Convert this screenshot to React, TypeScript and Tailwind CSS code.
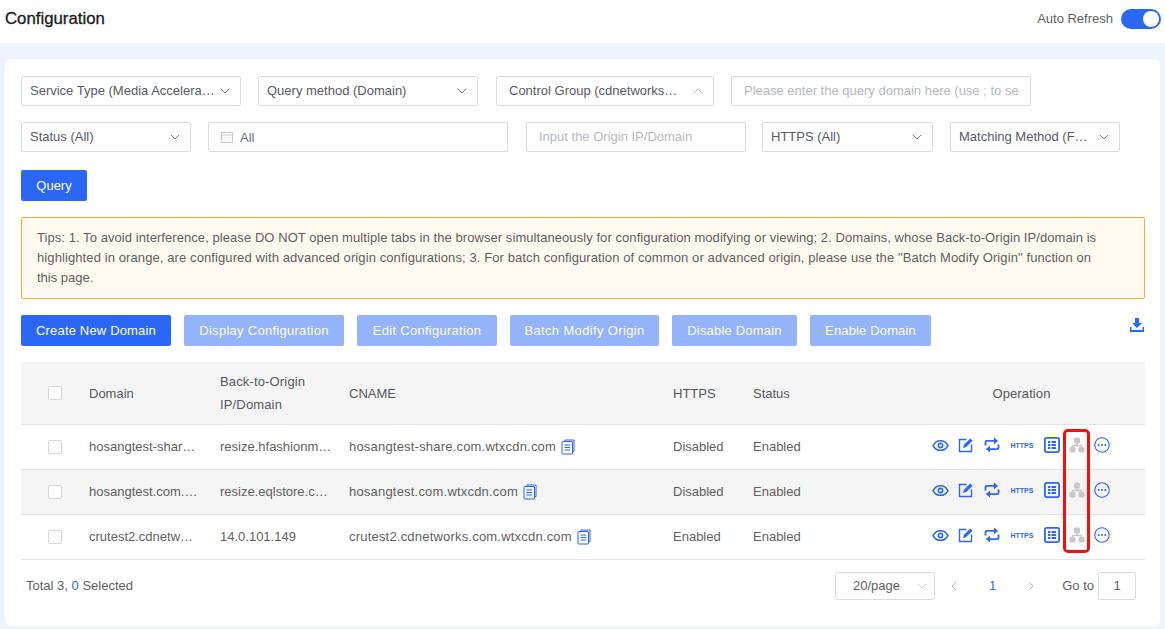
import React from "react";

const Chevron = ({ className = "text-[#7a7f8a]" }: { className?: string }) => (
  <svg width="12" height="12" viewBox="0 0 12 12" fill="none" className={className}>
    <path d="M2 4l4 4 4-4" stroke="currentColor" strokeWidth="1" strokeLinecap="round" strokeLinejoin="round" />
  </svg>
);

const Select = ({ label, w, up }: { label: string; w: string; up?: boolean }) => (
  <div className={`${w} h-[30px] shrink-0 border border-[#d9dbdf] rounded-[2px] flex items-center ${up ? "pl-3" : "pl-2"} pr-[9px] justify-between text-[#565a66]`}>
    <span className="truncate">{label}</span>
    <span className={up ? "rotate-180 shrink-0 ml-1" : "shrink-0 ml-1"}>
      <Chevron className={up ? "text-[#b9bcc2]" : "text-[#7a7f8a]"} />
    </span>
  </div>
);

const Eye = () => (
  <svg width="17" height="17" viewBox="0 0 16 16" fill="none">
    <path d="M1 8c1.600-3 4-4.500 7-4.500S13.400 5 15 8c-1.600 3-4 4.500-7 4.500S2.600 11 1 8z" stroke="#2b67f6" strokeWidth="1.500" />
    <circle cx="8" cy="8" r="2" stroke="#2b67f6" strokeWidth="1.500" />
  </svg>
);
const Edit = () => (
  <svg width="16" height="16" viewBox="0 0 16 16" fill="none">
    <path d="M8.500 2.500H1.500v12h12V7.500" stroke="#2b67f6" strokeWidth="1.400" />
    <path d="M5 11l.9-3.200 6.400-6.400 2.300 2.300-6.400 6.400z" fill="#2b67f6" />
  </svg>
);
const Retweet = () => (
  <svg width="16" height="16" viewBox="0 0 16 16" fill="none">
    <path d="M1.500 8.500V5.200c0-.8.500-1.300 1.300-1.300H12" stroke="#2b67f6" strokeWidth="1.900" />
    <path d="M10 0.500l4.200 3.400L10 7.300z" fill="#2b67f6" />
    <path d="M14.500 7.500v3.300c0 .8-.5 1.300-1.300 1.300H4" stroke="#2b67f6" strokeWidth="1.900" />
    <path d="M6 8.700L1.800 12.100 6 15.500z" fill="#2b67f6" />
  </svg>
);
const TableIcon = () => (
  <svg width="16" height="16" viewBox="0 0 16 16" fill="none">
    <rect x="0.900" y="0.900" width="14.200" height="14.200" rx="1.500" stroke="#2b67f6" strokeWidth="1.800" />
    <rect x="4" y="4" width="2.400" height="2" fill="#2b67f6" />
    <rect x="7.500" y="4" width="4.500" height="2" fill="#2b67f6" />
    <rect x="4" y="7" width="2.400" height="2" fill="#2b67f6" />
    <rect x="7.500" y="7" width="4.500" height="2" fill="#2b67f6" />
    <rect x="4" y="10" width="2.400" height="2" fill="#2b67f6" />
    <rect x="7.500" y="10" width="4.500" height="2" fill="#2b67f6" />
  </svg>
);
const Org = () => (
  <svg width="16" height="16" viewBox="0 0 16 16" fill="none">
    <rect x="5" y="0.500" width="6" height="6" rx="1.500" fill="#c8c8c8" />
    <path d="M8 6v3M3.500 11V8.500h9V11" stroke="#c8c8c8" strokeWidth="1.600" />
    <rect x="0.500" y="10" width="6" height="5.500" rx="1.500" fill="#c8c8c8" />
    <rect x="9.500" y="10" width="6" height="5.500" rx="1.500" fill="#c8c8c8" />
  </svg>
);
const More = () => (
  <svg width="16" height="16" viewBox="0 0 16 16" fill="none">
    <circle cx="8" cy="8" r="7.200" stroke="#2b67f6" strokeWidth="1.100" />
    <circle cx="4.700" cy="8" r="1" fill="#2b67f6" />
    <circle cx="8" cy="8" r="1" fill="#2b67f6" />
    <circle cx="11.300" cy="8" r="1" fill="#2b67f6" />
  </svg>
);
const Copy = () => (
  <svg width="14" height="16" viewBox="0 0 14 16" fill="none" className="shrink-0 ml-[5px]">
    <path d="M4 2.500V1h9v11.500h-1.500" stroke="#2b67f6" strokeWidth="1" />
    <rect x="1" y="2.500" width="10.500" height="12.500" rx="0.500" stroke="#2b67f6" strokeWidth="1" />
    <path d="M3.500 6h5.500M3.500 8.500h5.500M3.500 11h5.500" stroke="#2b67f6" strokeWidth="1" />
  </svg>
);

const Check = () => <div className="w-[14px] h-[14px] border border-[#d5d7db] rounded-[2px] bg-white" />;

const rows = [
  { d: "hosangtest-shar…", o: "resize.hfashionm…", c: "hosangtest-share.com.wtxcdn.com", h: "Disabled", bg: "bg-white" },
  { d: "hosangtest.com.…", o: "resize.eqlstore.c…", c: "hosangtest.com.wtxcdn.com", h: "Disabled", bg: "bg-[#f5f5f5]" },
  { d: "crutest2.cdnetw…", o: "14.0.101.149", c: "crutest2.cdnetworks.com.wtxcdn.com", h: "Enabled", bg: "bg-white" },
];

export default function App() {
  return (
    <div className="relative w-[1165px] h-[629px] overflow-hidden bg-[#edf4fb] text-[13px] leading-[20px] text-[#5f5f5f] font-['Liberation_Sans',Arial,sans-serif]">
      <header className="h-[43px] bg-white flex items-center justify-between pl-[5px] pr-1 pb-[5px]">
        <h1 className="text-[16.800px] font-medium text-[#1a1a1a] [-webkit-text-stroke:0.3px_#1a1a1a]">Configuration</h1>
        <div className="flex items-center gap-2">
          <span className="text-[#5f5f5f]">Auto Refresh</span>
          <div className="w-10 h-5 rounded-full bg-[#2b67f6] flex items-center justify-end pr-[2px]">
            <div className="w-4 h-4 rounded-full bg-white" />
          </div>
        </div>
      </header>

      <main className="mt-4 mx-[5px] h-[567px] bg-white rounded-[6px] pt-[17px] pl-4 pr-[15px]">
        <div className="flex gap-[17px]">
          <Select label="Service Type (Media Accelera…" w="w-[220px]" />
          <Select label="Query method (Domain)" w="w-[220px]" />
          <div className="ml-px"><Select label="Control Group (cdnetworks…" w="w-[218px]" up /></div>
          <div className="w-[300px] h-[30px] border border-[#d9dbdf] rounded-[2px] flex items-center pl-3 text-[#b5b8be] whitespace-nowrap overflow-hidden">
            Please enter the query domain here (use ; to se
          </div>
        </div>
        <div className="flex gap-[17px] mt-4">
          <Select label="Status (All)" w="w-[170px]" />
          <div className="w-[300px] h-[30px] border border-[#d9dbdf] rounded-[2px] flex items-center pl-3 gap-[7px] text-[#6d717b]">
            <svg width="12" height="12" viewBox="0 0 12 12" fill="none">
              <rect x="0.500" y="1.500" width="11" height="10" stroke="#c5c7cc" />
              <path d="M0.500 4h11M3 0.500v2M9 0.500v2" stroke="#c5c7cc" />
              <path d="M3 6.500h1M5.500 6.500h1M8 6.500h1M3 9h1M5.500 9h1M8 9h1" stroke="#d5d7da" />
            </svg>
            <span className="pt-px">All</span>
          </div>
          <div className="ml-px w-[220px] h-[30px] border border-[#d9dbdf] rounded-[2px] flex items-center pl-3 text-[#b5b8be]">
            Input the Origin IP/Domain
          </div>
          <Select label="HTTPS (All)" w="w-[171px] -ml-px" />
          <Select label="Matching Method (F…" w="w-[170px]" />
        </div>
        <button className="block mt-[18px] w-[66px] h-[31px] bg-[#2b67f6] rounded-[2px] text-white">Query</button>

        <div className="mt-4 h-[82px] border border-[#f5a83e] rounded-[2px] bg-[#fffaf0] pl-[15px] pt-[10px] text-[#5f5f5f] leading-[20px] whitespace-nowrap">
          <div className="tracking-[0.065px]">Tips: 1. To avoid interference, please DO NOT open multiple tabs in the browser simultaneously for configuration modifying or viewing; 2. Domains, whose Back-to-Origin IP/domain is</div>
          <div className="tracking-[0.1px]">highlighted in orange, are configured with advanced origin configurations; 3. For batch configuration of common or advanced origin, please use the "Batch Modify Origin" function on</div>
          <div>this page.</div>
        </div>

        <div className="mt-4 h-[31px] flex items-center gap-[13px] text-white">
          <button className="h-[31px] w-[150px] bg-[#2b67f6] rounded-[2px] tracking-[0.17px]">Create New Domain</button>
          <button className="h-[31px] w-[160px] bg-[#94b3fb] rounded-[2px] tracking-[0.28px]">Display Configuration</button>
          <button className="h-[31px] w-[140px] bg-[#94b3fb] rounded-[2px] tracking-[0.28px]">Edit Configuration</button>
          <button className="h-[31px] w-[149px] bg-[#94b3fb] rounded-[2px] tracking-[0.35px]">Batch Modify Origin</button>
          <button className="h-[31px] w-[125px] bg-[#94b3fb] rounded-[2px] tracking-[0.2px]">Disable Domain</button>
          <button className="h-[31px] w-[121px] bg-[#94b3fb] rounded-[2px] tracking-[0.15px]">Enable Domain</button>
          <svg width="16" height="16" viewBox="0 0 16 16" className="ml-auto mb-[11px] shrink-0" fill="#2b67f6">
            <path d="M6 1h4v5h3l-5 5-5-5h3z" />
            <path d="M1 10h1.500v3h11v-3H15v5H1z" />
          </svg>
        </div>

        <div className="mt-4">
          <div className="h-[63px] bg-[#f5f5f5] border-b border-[#e3e3e3] flex items-center text-[#55585f]">
            <div className="w-[68px] pl-[27px]"><Check /></div>
            <div className="w-[131px] pt-px">Domain</div>
            <div className="w-[129px] leading-[23px] tracking-[0.15px]">Back-to-Origin<br />IP/Domain</div>
            <div className="w-[324px] pt-px">CNAME</div>
            <div className="w-[80px] pt-px">HTTPS</div>
            <div className="w-[154px] pt-px">Status</div>
            <div className="w-[229px] pt-px text-center tracking-[0.1px]">Operation</div>
          </div>
          {rows.map((r) => (
            <div key={r.c} className={`h-[45px] ${r.bg} border-b border-[#e3e3e3] flex items-center`}>
              <div className="w-[68px] pl-[27px]"><Check /></div>
              <div className="w-[131px] whitespace-nowrap">{r.d}</div>
              <div className="w-[129px] whitespace-nowrap">{r.o}</div>
              <div className="w-[324px] flex items-center whitespace-nowrap"><span className="tracking-[0.2px]">{r.c}</span><Copy /></div>
              <div className="w-[80px]">{r.h}</div>
              <div className="w-[174px]">Enabled</div>
              <div className="flex items-center h-full -mt-[4px]">
                <div className="w-[26px] flex justify-center"><Eye /></div>
                <div className="w-[26px] flex justify-center"><Edit /></div>
                <div className="w-[26px] flex justify-center"><Retweet /></div>
                <div className="w-[34px] flex justify-center text-[7px] font-bold text-[#2b67f6] leading-none">HTTPS</div>
                <div className="w-[26px] flex justify-center"><TableIcon /></div>
                <div className="w-[24px] flex justify-center"><Org /></div>
                <div className="w-[25px] flex justify-center"><More /></div>
              </div>
            </div>
          ))}
        </div>

        <div className="flex items-center mt-[12px] h-[28px] pl-[5px] text-[#5f5f5f]">
          <span>Total 3, <span className="text-[#2b67f6]">0</span> Selected</span>
          <div className="ml-auto flex items-center pr-[9px]">
            <div className="w-[100px] h-[28px] border border-[#d9dbdf] rounded-[3px] flex items-center justify-between pl-[17px] pr-[6px]">
              20/page <Chevron className="text-[#c5c7cc]" />
            </div>
            <svg width="12" height="12" viewBox="0 0 12 12" className="ml-[13px] text-[#b5b8be]" fill="none"><path d="M8 2L4 6l4 4" stroke="currentColor" /></svg>
            <span className="ml-[29px] text-[#2b67f6]">1</span>
            <svg width="12" height="12" viewBox="0 0 12 12" className="ml-[29px] text-[#b5b8be]" fill="none"><path d="M4 2l4 4-4 4" stroke="currentColor" /></svg>
            <span className="ml-[25px]">Go to</span>
            <div className="ml-[4px] w-[38px] h-[28px] border border-[#d9dbdf] rounded-[2px] flex items-center justify-center">1</div>
          </div>
        </div>
      </main>

      <div className="absolute left-[1063px] top-[429px] w-[27px] h-[124px] border-[3px] border-[#f01010] rounded-[5px]" />
    </div>
  );
}
